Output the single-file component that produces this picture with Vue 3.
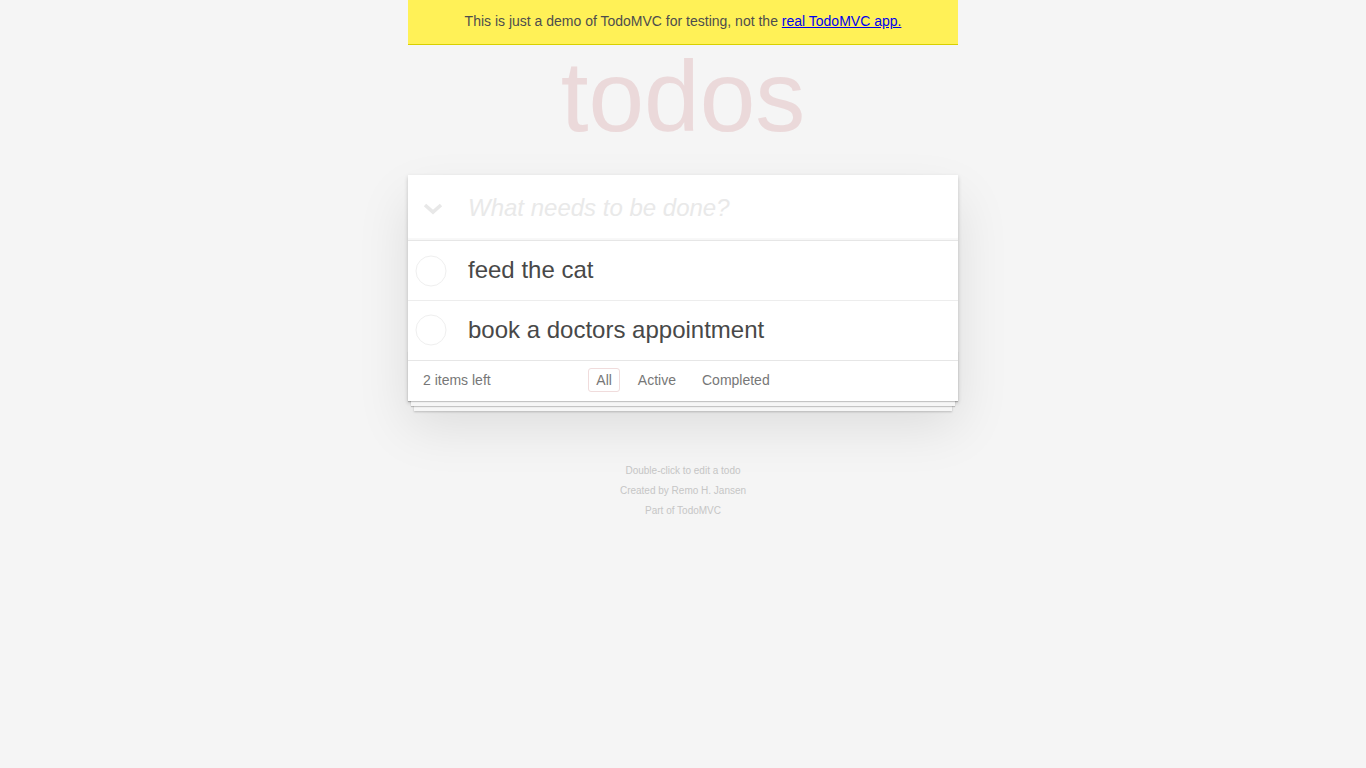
<script setup>
import { ref, computed } from 'vue'

const todos = ref([
  { id: 1, title: 'feed the cat', done: false },
  { id: 2, title: 'book a doctors appointment', done: false }
])
const draft = ref('')
const filter = ref('All')
const filters = ['All', 'Active', 'Completed']

const left = computed(() => todos.value.filter((t) => !t.done).length)
const visible = computed(() => {
  if (filter.value === 'Active') return todos.value.filter((t) => !t.done)
  if (filter.value === 'Completed') return todos.value.filter((t) => t.done)
  return todos.value
})

const addTodo = () => {
  const title = draft.value.trim()
  if (!title) return
  todos.value.push({ id: Date.now(), title, done: false })
  draft.value = ''
}
</script>

<template>
  <div class="page">
    <div class="banner">
      This is just a demo of TodoMVC for testing, not the
      <a href="#">real TodoMVC app.</a>
    </div>

    <section class="todoapp">
      <h1>todos</h1>
      <header class="new-row">
        <svg class="toggle-all" width="20" height="12" viewBox="0 0 20 12">
          <polyline points="2,2 10,9 18,2" fill="none" stroke="#e8e8e8" stroke-width="3.6" />
        </svg>
        <input v-model="draft" class="new-todo" placeholder="What needs to be done?" @keyup.enter="addTodo" />
      </header>

      <ul class="todo-list">
        <li v-for="todo in visible" :key="todo.id" @click="todo.done = !todo.done">
          <svg class="toggle" width="32" height="32" viewBox="0 0 32 32">
            <circle cx="16" cy="16" r="15" fill="none" stroke="#efefef" stroke-width="1" />
          </svg>
          <label>{{ todo.title }}</label>
        </li>
      </ul>

      <footer class="footer">
        <span class="count">{{ left }} items left</span>
        <ul class="filters">
          <li v-for="f in filters" :key="f">
            <a href="#" :class="{ selected: filter === f }" @click.prevent="filter = f">{{ f }}</a>
          </li>
        </ul>
      </footer>
    </section>

    <footer class="info">
      <p>Double-click to edit a todo</p>
      <p>Created by <a href="#">Remo H. Jansen</a></p>
      <p>Part of <a href="#">TodoMVC</a></p>
    </footer>
  </div>
</template>

<style>
html,
body {
  margin: 0;
  padding: 0;
  background: #f5f5f5;
}
</style>

<style scoped>
.page {
  width: 550px;
  margin: 0 auto;
  font: 14px/1.4em "Liberation Sans", Arial, sans-serif;
  color: #4d4d4d;
}

.banner {
  height: 44px;
  line-height: 42px;
  text-align: center;
  background: #fff157;
  border-bottom: 1px solid #d8d000;
  color: #4d4d4d;
}

.banner a {
  color: #0000ee;
  text-decoration: underline;
}

.todoapp {
  position: relative;
  isolation: isolate;
  margin: 130px 0 40px;
  background: #fff;
  box-shadow: 0 2px 4px 0 rgba(0, 0, 0, 0.2), 0 25px 50px 0 rgba(0, 0, 0, 0.1);
}

h1 {
  position: absolute;
  top: -149px;
  left: 0;
  width: 100%;
  margin: 0;
  font-size: 100px;
  line-height: 140px;
  font-weight: 200;
  text-align: center;
  color: #ebd9da;
}

.new-row {
  display: flex;
  align-items: center;
  height: 65px;
  box-shadow: inset 0 -2px 1px rgba(0, 0, 0, 0.03);
}

.toggle-all {
  flex: none;
  margin-left: 15px;
  margin-top: 3px;
}

.new-todo {
  flex: 1;
  min-width: 0;
  margin-left: 25px;
  padding: 0 16px 0 0;
  border: none;
  outline: none;
  background: transparent;
  font: italic 24px/1.4em "Liberation Sans", Arial, sans-serif;
  color: #4d4d4d;
}

.new-todo::placeholder {
  color: #e9e9e9;
  opacity: 1;
}

.todo-list {
  margin: 0;
  padding: 0;
  list-style: none;
  border-top: 1px solid #e6e6e6;
}

.todo-list li {
  display: flex;
  align-items: center;
  height: 59px;
  padding-left: 7px;
  border-bottom: 1px solid #ededed;
  font-size: 24px;
  color: #484848;
  cursor: pointer;
}

.todo-list li:last-child {
  border-bottom: none;
}

.toggle {
  flex: none;
  margin-top: 1px;
}

.todo-list li:last-child .toggle {
  margin-top: -1px;
}

.todo-list label {
  margin-left: 21px;
  line-height: 1.2;
  cursor: pointer;
}

.footer {
  display: grid;
  grid-template-columns: 1fr auto 1fr;
  align-items: center;
  height: 38px;
  padding: 0 15px 2px;
  border-top: 1px solid #e6e6e6;
  color: #777;
}

.count {
  line-height: 20px;
}

.filters {
  display: flex;
  gap: 4px;
  margin: 0;
  padding: 0;
  list-style: none;
}

.filters a {
  display: block;
  margin: 3px;
  padding: 3px 7px;
  line-height: 16px;
  border: 1px solid transparent;
  border-radius: 3px;
  color: #777;
  text-decoration: none;
}

.filters a.selected {
  border-color: #f0dcdc;
}

.footer::before {
  content: "";
  position: absolute;
  left: 0;
  right: 0;
  bottom: 0;
  height: 50px;
  z-index: -1;
  box-shadow: 0 1px 1px rgba(0, 0, 0, 0.2), 0 8px 0 -3px #f6f6f6, 0 9px 1px -3px rgba(0, 0, 0, 0.2),
    0 16px 0 -6px #f6f6f6, 0 17px 2px -6px rgba(0, 0, 0, 0.2);
}

.info {
  margin-top: 64px;
  font-size: 10px;
  text-align: center;
  color: #c6c6c6;
}

.info p {
  margin: 9px 0;
  line-height: 11px;
}

.info a {
  color: inherit;
  text-decoration: none;
}
</style>
